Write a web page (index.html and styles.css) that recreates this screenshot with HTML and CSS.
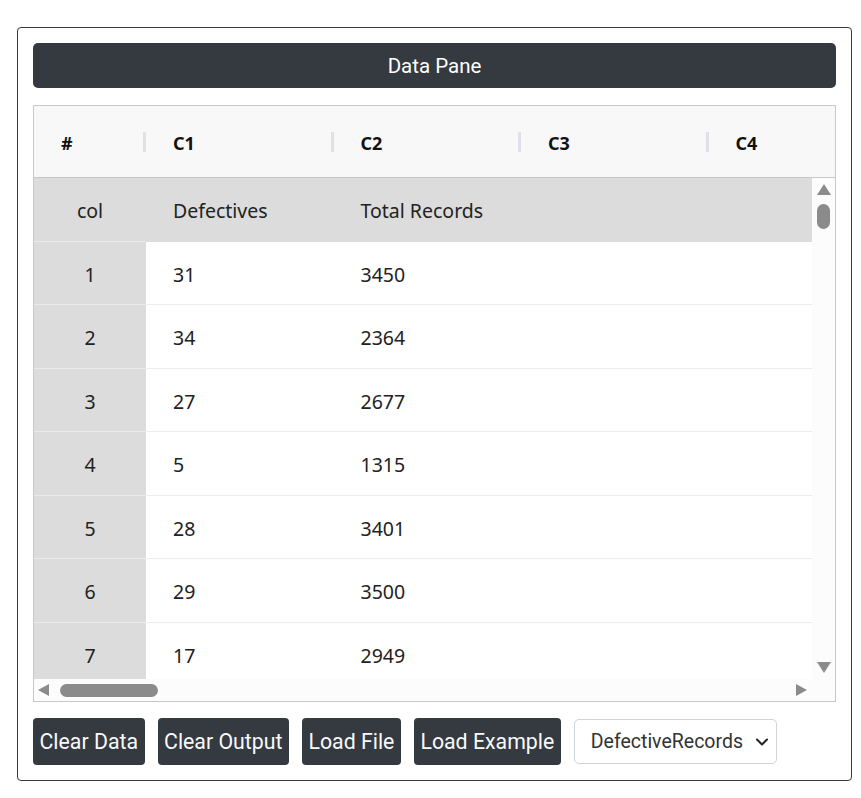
FILE: index.html
```html
<!DOCTYPE html>
<html>
<head>
<meta charset="utf-8">
<link rel="stylesheet" href="styles.css">
</head>
<body>
<div class="card">
  <div class="pane-title">Data Pane</div>
  <div class="grid">
    <div class="head">
      <div class="hc idx">#<span class="sep"></span></div>
      <div class="hc">C1<span class="sep"></span></div>
      <div class="hc">C2<span class="sep"></span></div>
      <div class="hc">C3<span class="sep"></span></div>
      <div class="hc">C4<span class="sep"></span></div>
    </div>
    <div class="viewport">
      <div class="row namerow"><div class="c idx">col</div><div class="c">Defectives</div><div class="c">Total Records</div><div class="c"></div><div class="c"></div></div>
      <div class="row"><div class="c idx">1</div><div class="c">31</div><div class="c">3450</div><div class="c"></div><div class="c"></div></div>
      <div class="row"><div class="c idx">2</div><div class="c">34</div><div class="c">2364</div><div class="c"></div><div class="c"></div></div>
      <div class="row"><div class="c idx">3</div><div class="c">27</div><div class="c">2677</div><div class="c"></div><div class="c"></div></div>
      <div class="row"><div class="c idx">4</div><div class="c">5</div><div class="c">1315</div><div class="c"></div><div class="c"></div></div>
      <div class="row"><div class="c idx">5</div><div class="c">28</div><div class="c">3401</div><div class="c"></div><div class="c"></div></div>
      <div class="row"><div class="c idx">6</div><div class="c">29</div><div class="c">3500</div><div class="c"></div><div class="c"></div></div>
      <div class="row"><div class="c idx">7</div><div class="c">17</div><div class="c">2949</div><div class="c"></div><div class="c"></div></div>
    </div>
    <div class="vbar">
      <span class="arr up"></span>
      <span class="vthumb"></span>
      <span class="vfill"></span>
      <span class="arr down"></span>
    </div>
    <div class="hbar">
      <span class="arr left"></span>
      <span class="hthumb"></span>
      <span class="hfill"></span>
      <span class="arr right"></span>
    </div>
    <div class="corner"></div>
  </div>
  <div class="actions">
    <button class="btn">Clear Data</button>
    <button class="btn">Clear Output</button>
    <button class="btn">Load File</button>
    <button class="btn">Load Example</button>
    <div class="select">DefectiveRecords
      <svg class="chev" width="14" height="10" viewBox="0 0 14 10"><path d="M2 2.5 L7 7.5 L12 2.5" fill="none" stroke="#222" stroke-width="2" stroke-linecap="round" stroke-linejoin="round"/></svg>
    </div>
  </div>
</div>
</body>
</html>
```

FILE: styles.css
```css
* { box-sizing: border-box; }
html, body { margin: 0; padding: 0; background: #fff; }
body { padding: 27px 0 0 17px; font-family: Roboto, "Liberation Sans", sans-serif; }

.card {
  width: 835px;
  border: 1px solid #3a3a3a;
  border-radius: 4px;
  padding: 15px 15px 15px 15px;
  display: flex;
  flex-direction: column;
}

.pane-title {
  height: 45px;
  background: #343a40;
  color: #fff;
  border-radius: 5px;
  display: flex;
  align-items: center;
  justify-content: center;
  font-size: 20.5px;
  margin-bottom: 17px;
}

.grid {
  height: 597px;
  border: 1px solid #c8c8c8;
  display: grid;
  grid-template-columns: 778px 23px;
  grid-template-rows: 72px 501px 22px;
  overflow: hidden;
  background: #fcfcfc;
  font-family: "Noto Sans", "Open Sans", sans-serif;
  color: #222;
}

.head {
  grid-column: 1 / 3;
  display: flex;
  background: #f8f8f8;
  border-bottom: 1px solid #c8c8c8;
  overflow: hidden;
}
.hc {
  flex: 0 0 187.5px;
  position: relative;
  display: flex;
  align-items: center;
  padding-left: 27px;
  padding-top: 3px;
  font-weight: 700;
  font-size: 18px;
  color: #111;
}
.hc.idx { flex-basis: 112px; }
.sep {
  position: absolute;
  right: 0;
  top: 26px;
  width: 3px;
  height: 20px;
  background: #dfe1e6;
}

.viewport {
  overflow: hidden;
  background: #fdfdfd;
}
.row {
  display: flex;
  height: 63.5px;
}
.c {
  flex: 0 0 187.5px;
  display: flex;
  align-items: center;
  padding-left: 27px;
  padding-top: 3px;
  font-size: 19.5px;
  background: #fff;
  border-bottom: 1px solid #ececec;
  color: #222;
}
.c.idx {
  flex-basis: 112px;
  justify-content: center;
  padding-left: 0;
  background: #dcdcdc;
  border-bottom: 1px solid #ebebeb;
}
.namerow { width: 778px; }
.namerow .c { background: #dcdcdc; border-bottom: 1px solid #dcdcdc; }
.namerow .c.idx { border-bottom: 1px solid #ebebeb; }

.vbar {
  display: flex;
  flex-direction: column;
  align-items: center;
  padding: 6px 0 6px 0;
  background: #fcfcfc;
}
.hbar {
  display: flex;
  align-items: center;
  padding: 0 5px 0 4px;
  background: #fcfcfc;
}
.corner { background: #fcfcfc; }
.vthumb {
  width: 13px;
  height: 25px;
  border-radius: 7px;
  background: #8b8b8b;
  margin-top: 9px;
}
.vfill, .hfill { flex: 1; }
.hthumb {
  width: 98px;
  height: 13px;
  border-radius: 7px;
  background: #8b8b8b;
  margin-left: 11px;
}
.arr { width: 0; height: 0; border: solid transparent; }
.arr.up { border-width: 0 7px 11px 7px; border-bottom-color: #8b8b8b; }
.arr.down { border-width: 11px 7px 0 7px; border-top-color: #8b8b8b; }
.arr.left { border-width: 6px 11px 6px 0; border-right-color: #8b8b8b; margin-left: 0; }
.arr.right { border-width: 6px 0 6px 11px; border-left-color: #8b8b8b; }

.actions {
  display: flex;
  align-items: center;
  gap: 13px;
  margin-top: 16px;
}
.btn {
  height: 47px;
  background: #343a40;
  color: #f8f9fa;
  border: none;
  border-radius: 4px;
  padding: 0 6.5px;
  font-family: Roboto, "Liberation Sans", sans-serif;
  font-size: 21.3px;
}
.select {
  width: 203px;
  height: 45px;
  border: 1px solid #ced4da;
  border-radius: 5px;
  display: flex;
  align-items: center;
  padding-left: 16px;
  font-size: 19.5px;
  color: #333;
  position: relative;
}
.chev { position: absolute; right: 7px; top: 17px; }
```
